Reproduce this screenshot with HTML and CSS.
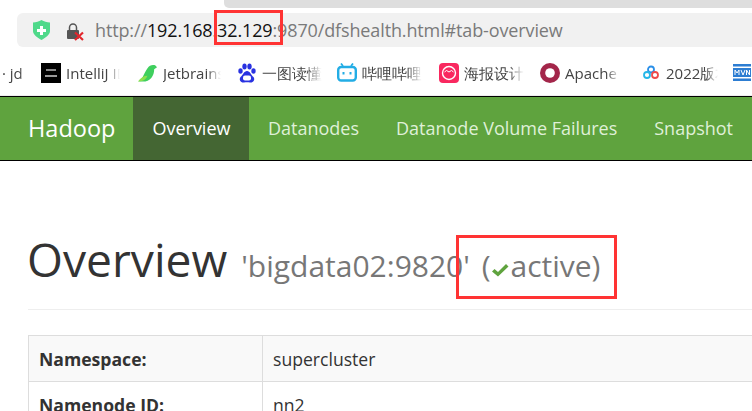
FILE: index.html
```html
<!DOCTYPE html>
<html>
<head>
    <meta charset="utf-8">
    <title>Namenode information</title>
    <link rel="stylesheet" href="styles.css">
</head>
<body>
    <!-- browser chrome -->
    <div class="tabstrip"><div class="tabstrip-gray"></div></div>
    <div class="addressbar">
        <svg class="shield" width="19" height="20" viewBox="0 0 19 20">
            <path d="M1 2.500 C4 2.500 7 1.500 9.500 0 C12 1.500 15 2.500 18 2.500 V11 C18 15 13 18 9.500 20 C6 18 1 15 1 11 Z" fill="#4fd98a"/>
            <path d="M8 6 H11 V9 H14 V12 H11 V15 H8 V12 H5 V9 H8 Z" fill="#fff"/>
        </svg>
        <svg class="lock" width="18" height="18" viewBox="0 0 18 18">
            <path d="M3.500 7 V4.500 A3.500 3.500 0 0 1 10.500 4.500 V7" fill="none" stroke="#555" stroke-width="1.500"/>
            <rect x="1" y="7" width="12" height="9" rx="1" fill="#555"/>
            <path d="M9 9.500 L17 17 M17 9.500 L9 17" stroke="#e2262c" stroke-width="2.200"/>
        </svg>
        <div class="url">http://<span class="host">192.168.32.129</span>:9870/dfshealth.html#tab-overview</div>
    </div>
    <div class="bookmarks">
        <span class="bm bm-first"><span class="bm-text w-first">· jd</span></span>
        <span class="bm bm-idea">
            <svg class="bm-icon" width="20" height="20" viewBox="0 0 20 20"><rect width="20" height="20" fill="#000"/><rect x="5" y="6" width="10" height="2" fill="#888"/><rect x="4" y="12" width="12" height="2" fill="#999"/></svg>
            <span class="bm-text w-idea">IntelliJ IDEA</span>
        </span>
        <span class="bm bm-jet">
            <svg class="bm-icon" width="21" height="20" viewBox="0 0 22 20"><path d="M1 19 C6 18 7 10 11 5 C13 2 16 1 19 2 L21 4 L18 6 C18 13 14 19 6 19 Z" fill="#3fcf5e"/><path d="M1 19 C4 15 7 13 11 13 C10 16 7 19 1 19 Z" fill="#8ee04d"/></svg>
            <span class="bm-text w-jet">Jetbrains</span>
        </span>
        <span class="bm bm-baidu">
            <svg class="bm-icon" width="18" height="20" viewBox="0 0 18 20"><g fill="#2932e1"><ellipse cx="2.500" cy="8" rx="2.200" ry="2.800"/><ellipse cx="6.500" cy="3.500" rx="2.200" ry="2.900"/><ellipse cx="11.500" cy="3.500" rx="2.200" ry="2.900"/><ellipse cx="15.500" cy="8" rx="2.200" ry="2.800"/><path d="M9 8 C12 8 13 12 15.500 14 C17.500 17 15 20 12 19.500 C10 19 8 19 6 19.500 C3 20 .5 17 2.500 14 C5 12 6 8 9 8 Z"/></g><rect x="5" y="12.500" width="8" height="5" rx="2" fill="#fff"/></svg>
            <span class="bm-text w-baidu">一图读懂</span>
        </span>
        <span class="bm bm-bili">
            <svg class="bm-icon" width="20" height="20" viewBox="0 0 20 20"><path d="M6 3 L4 0.500 M14 3 L16 0.500" stroke="#23ade5" stroke-width="1.800"/><rect x="1.200" y="4" width="17.600" height="13.500" rx="3" fill="none" stroke="#23ade5" stroke-width="2.400"/><path d="M6.500 9 V11.500 M13.500 9 V11.500" stroke="#23ade5" stroke-width="2"/></svg>
            <span class="bm-text w-bili">哔哩哔哩</span>
        </span>
        <span class="bm bm-poster">
            <svg class="bm-icon" width="20" height="20" viewBox="0 0 20 20"><rect width="20" height="20" rx="4" fill="#f9285f"/><circle cx="10" cy="10" r="6.500" fill="none" stroke="#fff" stroke-width="1.400"/><path d="M5.500 9 L7.500 7.500 L10 9 L12.500 7.500 L14.500 9" fill="none" stroke="#fff"/></svg>
            <span class="bm-text w-poster">海报设计</span>
        </span>
        <span class="bm bm-apache">
            <svg class="bm-icon" width="20" height="20" viewBox="0 0 20 20"><circle cx="10" cy="10" r="10" fill="#a3264a"/><circle cx="10" cy="10" r="4.800" fill="#fff"/></svg>
            <span class="bm-text w-apache">Apache</span>
        </span>
        <span class="bm bm-2022">
            <svg class="bm-icon" width="20" height="20" viewBox="0 0 20 20"><g fill="none" stroke-width="1.800"><circle cx="10" cy="6.500" r="3" stroke="#2a8fe8"/><circle cx="6" cy="12" r="3" stroke="#25b7e8"/><circle cx="14" cy="12" r="3" stroke="#ee4a4a"/></g></svg>
            <span class="bm-text w-2022">2022版本</span>
        </span>
        <span class="bm bm-mvn">
            <svg class="bm-icon" width="20" height="20" viewBox="0 0 18 20"><rect width="18" height="2.500" y="1" fill="#2d7dd2"/><rect width="18" height="9" y="5" fill="#2d7dd2"/><rect width="18" height="2.500" y="15.500" fill="#2d7dd2"/><path d="M2 12 V7 L4 10 L6 7 V12 M8 7 L10 12 L12 7 M13.500 12 V7 L16.500 12 V7" fill="none" stroke="#fff"/></svg>
        </span>
    </div>

    <!-- hadoop page -->
    <nav class="navbar">
        <a class="brand">Hadoop</a>
        <a class="navlink active">Overview</a>
        <a class="navlink">Datanodes</a>
        <a class="navlink">Datanode Volume Failures</a>
        <a class="navlink">Snapshot</a>
    </nav>

    <div class="content">
        <div class="page-header">
            <h1>Overview <small class="subtitle">'bigdata02:9820' <span class="paren">(</span><svg class="check" width="18" height="16" viewBox="0 0 18 16"><path d="M1 9.500 L3.500 7 L7 10 L15 2 L17.500 4.500 L7 14.500 Z" fill="#5fa33e"/></svg>active)</small></h1>
        </div>
        <table class="info">
            <tr class="striped"><th>Namespace:</th><td>supercluster</td></tr>
            <tr><th>Namenode ID:</th><td>nn2</td></tr>
        </table>
    </div>

    <div class="mark mark-ip"></div>
    <div class="mark mark-state"></div>
</body>
</html>
```

FILE: styles.css
```css
html, body
{
    margin: 0;
    height: 411px;
    overflow: hidden;
}
body
{
    position: relative;
    background: #FFFFFF;
    font-family: "Open Sans", sans-serif;
    color: #333333;
}

/* browser chrome */
.tabstrip
{
    height: 13px;
}
.tabstrip-gray
{
    margin-left: 224px;
    height: 8px;
    background: #DEDEDE;
    border-bottom-left-radius: 5px;
}
.addressbar
{
    display: flex;
    align-items: center;
    height: 34px;
    margin-left: 17px;
    padding-left: 15px;
    background: #F1F1F1;
    border-radius: 6px 0 0 6px;
}
.shield
{
    margin-right: 15px;
}
.lock
{
    margin-right: 11px;
    margin-top: 3px;
}
.url
{
    font-size: 18px;
    letter-spacing: -0.13px;
    color: #7A7A7A;
    white-space: nowrap;
}
.host
{
    color: #111111;
}
.bookmarks
{
    display: flex;
    align-items: center;
    box-sizing: border-box;
    height: 49px;
    padding-top: 4px;
    border-bottom: 1px solid #EEEEEE;
    overflow: hidden;
    white-space: nowrap;
    font-size: 15px;
    color: #444444;
}
.bm
{
    display: flex;
    align-items: center;
    flex: none;
}
.bm-icon
{
    flex: none;
    margin-right: 5px;
}
.bm-text
{
    display: block;
    overflow: hidden;
    -webkit-mask-image: linear-gradient(to right, #000 75%, transparent);
    mask-image: linear-gradient(to right, #000 75%, transparent);
}
.bm-first { width: 39px; padding-left: 2px; }
.bm-idea { width: 96px; }
.bm-jet { width: 101px; }
.bm-baidu { width: 99px; }
.bm-bili { width: 102px; }
.bm-poster { width: 101px; }
.bm-apache { width: 101px; }
.bm-2022 { width: 91px; }
.bm-baidu .bm-icon { margin-right: 6px; }
.w-first { width: 24px; }
.w-idea { width: 54px; }
.w-jet { width: 58px; }
.w-baidu { width: 60px; }
.w-bili { width: 60px; }
.w-poster { width: 60px; }
.w-apache { width: 55px; }
.w-2022 { width: 52px; }

/* navbar */
.navbar
{
    display: flex;
    height: 63px;
    background: #5FA33E;
    border-top: 1px solid #000000;
    border-bottom: 1px solid #000000;
    white-space: nowrap;
}
.brand
{
    padding: 0 18px 0 28px;
    font-size: 23.5px;
    line-height: 63px;
    color: #FFFFFF;
}
.navlink
{
    padding: 0 18.5px;
    font-size: 18px;
    line-height: 63px;
    color: #DFF0D8;
}
.navlink.active
{
    padding: 0 19px;
    background: #446633;
    color: #FFFFFF;
}

/* page */
.content
{
    padding: 0 0 0 28px;
}
.page-header
{
    margin-top: 64px;
    height: 84px;
    border-bottom: 1px solid #EEEEEE;
}
h1
{
    margin: 0 0 0 -1px;
    font-size: 46.2px;
    font-weight: 400;
    line-height: 70px;
    white-space: nowrap;
}
.subtitle
{
    margin-left: 2px;
    font-size: 30px;
    color: #777777;
}
.paren
{
    margin-left: 4px;
}
.check
{
    vertical-align: -1px;
    margin: 0 1px;
}
.info
{
    margin-top: 25px;
    width: 800px;
    border-collapse: collapse;
    font-size: 17.6px;
}
.info th, .info td
{
    height: 45px;
    padding: 0 10px;
    border: 1px solid #DDDDDD;
    text-align: left;
}
.info th
{
    width: 213px;
}
.striped
{
    background: #F9F9F9;
}

/* red marks drawn over the screenshot */
.mark
{
    position: absolute;
    box-sizing: border-box;
    border: 3px solid #FF3333;
}
.mark-ip
{
    left: 214px;
    top: 10px;
    width: 69px;
    height: 35px;
}
.mark-state
{
    left: 456px;
    top: 235px;
    width: 161px;
    height: 64px;
}
```
